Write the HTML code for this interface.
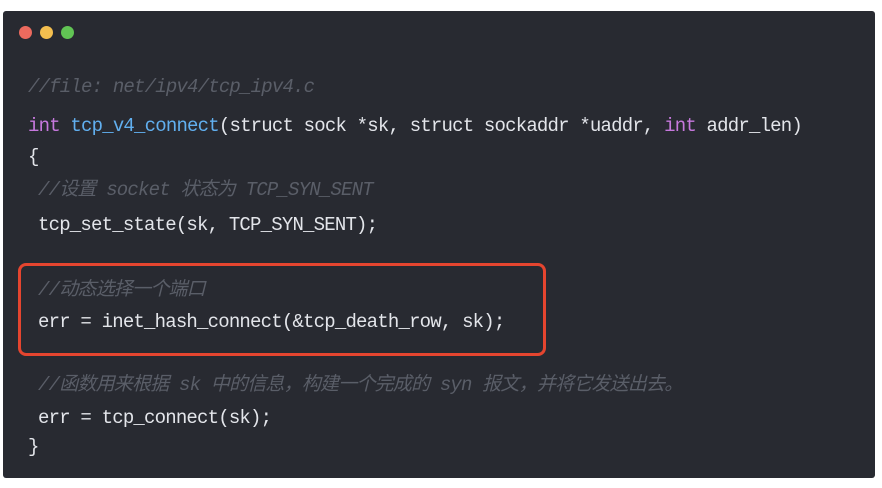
<!DOCTYPE html>
<html><head><meta charset="utf-8"><style>
body{margin:0;width:882px;height:488px;background:#fff;position:relative;overflow:hidden}
.card{position:absolute;left:3px;top:11px;width:872px;height:467px;background:#282a31;border-radius:3px}
.dot{position:absolute;top:26px;width:13px;height:13px;border-radius:50%}
.l{position:absolute;white-space:pre;font-family:"Liberation Mono","Noto Sans CJK SC",monospace;font-size:19px;letter-spacing:-0.8px;color:#e3e5ea;line-height:20px}
.c{color:#5a5e68;font-style:italic}
.k{color:#c678dd}.f{color:#61afef}
.box{position:absolute;left:18px;top:263px;width:522px;height:87px;border:3px solid #e5452f;border-radius:8px}
</style></head><body>
<div class="card"></div>
<div class="dot" style="left:19px;background:#ec6a5e"></div>
<div class="dot" style="left:40px;background:#f4bf4f"></div>
<div class="dot" style="left:61px;background:#61c454"></div>
<div class="l c" style="left:28px;top:77px">//file: net/ipv4/tcp_ipv4.c</div>
<div class="l" style="left:28px;top:116px"><span class="k">int</span> <span class="f">tcp_v4_connect</span>(struct sock *sk, struct sockaddr *uaddr, <span class="k">int</span> addr_len)</div>
<div class="l" style="left:28px;top:147px">{</div>
<div class="l c" style="left:38px;top:180px">//设置 socket 状态为 TCP_SYN_SENT</div>
<div class="l" style="left:38px;top:215px">tcp_set_state(sk, TCP_SYN_SENT);</div>
<div class="box"></div>
<div class="l c" style="left:38px;top:280px">//动态选择一个端口</div>
<div class="l" style="left:38px;top:312px">err = inet_hash_connect(&amp;tcp_death_row, sk);</div>
<div class="l c" style="left:38px;top:375px">//函数用来根据 sk 中的信息，构建一个完成的 syn 报文，并将它发送出去。</div>
<div class="l" style="left:38px;top:408px">err = tcp_connect(sk);</div>
<div class="l" style="left:28px;top:437px">}</div>
</body></html>
